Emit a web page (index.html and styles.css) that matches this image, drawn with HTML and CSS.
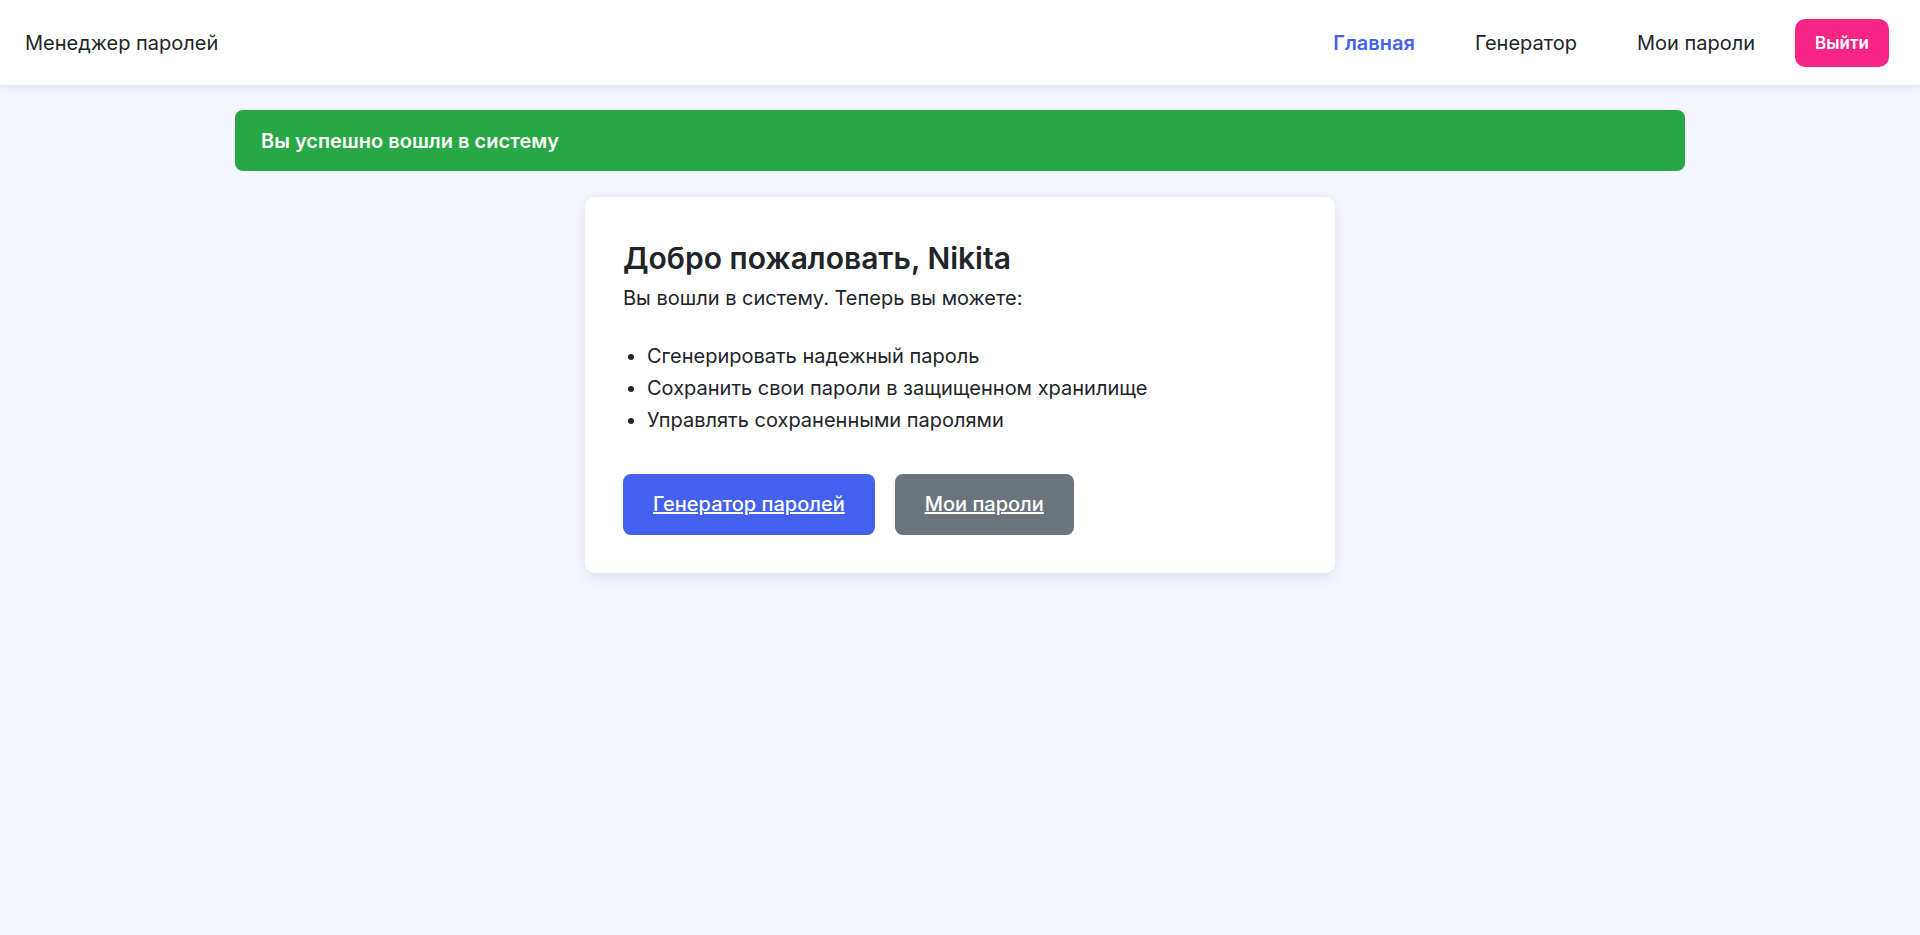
FILE: index.html
```html
<!DOCTYPE html>
<html lang="ru">
<head>
<meta charset="utf-8">
<title>Менеджер паролей</title>
<link rel="stylesheet" href="styles.css">
</head>
<body>
<header class="topbar">
  <div class="brand">Менеджер паролей</div>
  <nav class="nav">
    <a class="nav-link active" href="#">Главная</a>
    <a class="nav-link" href="#">Генератор</a>
    <a class="nav-link" href="#">Мои пароли</a>
    <a class="logout" href="#">Выйти</a>
  </nav>
</header>
<main class="main">
  <div class="alert">Вы успешно вошли в систему</div>
  <section class="card">
    <h2 class="card-title">Добро пожаловать, Nikita</h2>
    <p class="card-text">Вы вошли в систему. Теперь вы можете:</p>
    <ul class="features">
      <li>Сгенерировать надежный пароль</li>
      <li>Сохранить свои пароли в защищенном хранилище</li>
      <li>Управлять сохраненными паролями</li>
    </ul>
    <div class="actions">
      <a class="btn btn-primary" href="#">Генератор паролей</a>
      <a class="btn btn-secondary" href="#">Мои пароли</a>
    </div>
  </section>
</main>
</body>
</html>
```
FILE: styles.css
```css
* { box-sizing: border-box; }
html, body { margin: 0; padding: 0; }
body {
  font-family: Inter, "Noto Sans", sans-serif;
  background: #f3f6fe;
  color: #212529;
  min-height: 935px;
}
.topbar {
  height: 85px;
  background: #ffffff;
  display: flex;
  align-items: center;
  justify-content: space-between;
  padding: 0 31px 0 25px;
  box-shadow: 0 2px 10px rgba(60, 70, 120, 0.12);
  position: relative;
}
.brand {
  font-size: 20px;
  color: #212529;
}
.nav {
  display: flex;
  align-items: center;
  gap: 20px;
}
.nav-link {
  font-size: 20px;
  color: #212529;
  text-decoration: none;
  padding: 10px 20px;
  font-weight: 400;
}
.nav-link.active {
  color: #4361ee;
  font-weight: 600;
}
.logout {
  background: #f72585;
  color: #ffffff;
  text-decoration: none;
  font-weight: 600;
  font-size: 17px;
  line-height: 24px;
  padding: 12px 20px;
  border-radius: 10px;
}
.main {
  padding: 25px 0;
  display: flex;
  flex-direction: column;
  align-items: center;
}
.alert {
  width: 1450px;
  height: 61px;
  background: #28a745;
  color: #ffffff;
  border-radius: 8px;
  font-size: 20px;
  font-weight: 600;
  padding: 0 26px;
  display: flex;
  align-items: center;
  margin-bottom: 26px;
}
.card {
  width: 750px;
  background: #ffffff;
  border-radius: 10px;
  padding: 38px;
  box-shadow: 0 4px 14px rgba(60, 70, 120, 0.12);
}
.card-title {
  margin: 5px 0 0;
  font-size: 30px;
  line-height: 36px;
  font-weight: 600;
}
.card-text {
  margin: 7px 0 0;
  font-size: 20px;
  line-height: 30px;
}
.features {
  margin: 27px 0 0;
  padding-left: 24px;
  font-size: 20px;
  line-height: 32px;
}
.actions {
  display: flex;
  gap: 20px;
  margin-top: 38px;
}
.btn {
  color: #ffffff;
  font-size: 20px;
  font-weight: 500;
  line-height: 31px;
  padding: 15px 30px;
  border-radius: 8px;
  text-decoration: underline;
}
.btn-primary { background: #4361ee; }
.btn-secondary { background: #6c757d; }
```
